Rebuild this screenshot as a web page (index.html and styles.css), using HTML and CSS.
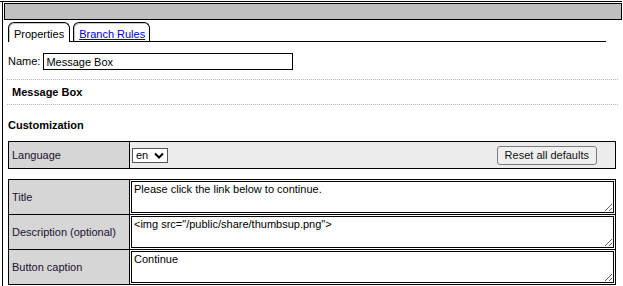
FILE: index.html
```html
<!doctype html>
<html>
  <head>
    <title>Message Box</title>
    <link rel="stylesheet" href="styles.css">
  </head>
  <body>
    <div class="page">
      <div class="frame">
        <div class="titlebar"></div>
        <div class="content">
          <div class="tabs">
            <span class="tab active">Properties</span>
            <a class="tab" href="#">Branch Rules</a>
          </div>

          <div class="name-row">
            <label for="nameInput">Name:</label>
            <input id="nameInput" class="name-input" type="text" value="Message Box" />
          </div>

          <div class="section-title">Message Box</div>

          <div class="group-title">Customization</div>

          <table class="grid lang-table">
            <tr>
              <td class="label">Language</td>
              <td class="value">
                <div class="lang-control">
                  <span class="select-wrap">
                    <select class="lang-select">
                      <option>en</option>
                    </select>
                    <svg class="chevron" width="10" height="7" viewBox="0 0 10 7">
                      <path d="M1 1.5 L5 5.5 L9 1.5" fill="none" stroke="#000" stroke-width="2" />
                    </svg>
                  </span>
                  <button class="reset-btn">Reset all defaults</button>
                </div>
              </td>
            </tr>
          </table>

          <table class="grid fields-table">
            <tr>
              <td class="label">Title</td>
              <td class="field"><textarea>Please click the link below to continue.</textarea></td>
            </tr>
            <tr>
              <td class="label">Description (optional)</td>
              <td class="field"><textarea>&lt;img src="/public/share/thumbsup.png"&gt;</textarea></td>
            </tr>
            <tr>
              <td class="label">Button caption</td>
              <td class="field"><textarea>Continue</textarea></td>
            </tr>
          </table>
        </div>
      </div>
    </div>
  </body>
</html>
```

FILE: styles.css
```css
:root {
  --line: #000000;
  --bar: #c0c0c0;
  --label-bg: #d6d6d6;
  --row-bg: #ececec;
  --dots: #b4b4b4;
  --label-text: #1c1030;
  --link: #0000cc;
}

html,
body {
  height: 100%;
}

body {
  margin: 0;
  font-family: 'Liberation Sans', Arial, sans-serif;
  font-size: 11px;
  line-height: 13px;
  color: #000;
  background: #fff;
  overflow: hidden;
}

.page {
  height: calc(100% - 1px);
  margin: 1px 1px 0 0;
  border-top: 1px solid var(--line);
  box-sizing: border-box;
}

.frame {
  height: 100%;
  margin-left: 2px;
  padding: 1px 0 0 1px;
  border-left: 1px solid var(--line);
  box-sizing: border-box;
}

.titlebar {
  height: 15px;
  background: var(--bar);
  border: 1px solid var(--line);
}

.content {
  padding: 2px 4px 0 4px;
}

.tabs {
  display: flex;
  align-items: flex-end;
  gap: 3px;
  height: 19px;
  margin-right: 12px;
  border-bottom: 1px solid var(--line);
}

.tab {
  height: 19px;
  box-sizing: border-box;
  padding: 5px 4px 0 5px;
  border: 1px solid var(--line);
  border-bottom: none;
  border-radius: 6px 6px 0 0;
  box-shadow: inset 1px 1px 0 #c8c8c8;
  background: #fff;
  color: #000;
  white-space: nowrap;
}

.tab.active {
  height: 20px;
  margin-bottom: -1px;
  padding-right: 5px;
}

a.tab {
  color: var(--link);
  text-decoration: underline;
}

.name-row {
  display: flex;
  align-items: center;
  gap: 3px;
  margin-top: 11px;
}

.name-input {
  width: 250px;
  height: 17px;
  box-sizing: border-box;
  margin: 0;
  padding: 0 2px;
  border: 1px solid var(--line);
  font: inherit;
  color: #000;
  outline: none;
}

.section-title {
  margin: 9px 0 0 -1px;
  padding-left: 5px;
  line-height: 24px;
  font-weight: bold;
  border-top: 1px dotted var(--dots);
  border-bottom: 1px dotted var(--dots);
}

.group-title {
  margin-top: 14px;
  font-weight: bold;
}

.grid {
  width: 608px;
  border-collapse: collapse;
}

.grid td {
  border: 1px solid var(--line);
}

.grid .label {
  width: 115px;
  padding: 1px 2px 0 3px;
  background: var(--label-bg);
  color: var(--label-text);
  vertical-align: middle;
}

.lang-table {
  margin-top: 9px;
}

.lang-table td {
  height: 25px;
}

.lang-table .value {
  padding: 0 18px 0 2px;
  background: var(--row-bg);
}

.lang-control {
  display: flex;
  align-items: center;
  justify-content: space-between;
}

.select-wrap {
  position: relative;
  display: inline-block;
  margin-top: 1px;
}

.lang-select {
  width: 36px;
  height: 15px;
  box-sizing: border-box;
  margin: 0;
  padding: 0 0 0 3px;
  border: 1px solid #555;
  border-radius: 0;
  background: #fff;
  font: inherit;
  color: #000;
  -webkit-appearance: none;
  appearance: none;
}

.chevron {
  position: absolute;
  right: 4px;
  top: 4px;
  pointer-events: none;
}

.reset-btn {
  height: 19px;
  margin: 0;
  padding: 0 7px;
  border: 1px solid #7a7a7a;
  border-radius: 3px;
  background: #efefef;
  font: inherit;
  color: #111;
}

.fields-table {
  margin-top: 10px;
}

.fields-table .field {
  padding: 1px;
  background: #fff;
}

.field textarea {
  display: block;
  width: 100%;
  height: 32px;
  box-sizing: border-box;
  margin: 0;
  padding: 1px 2px;
  border: 1px solid var(--line);
  font: inherit;
  color: #000;
  outline: none;
}
```
